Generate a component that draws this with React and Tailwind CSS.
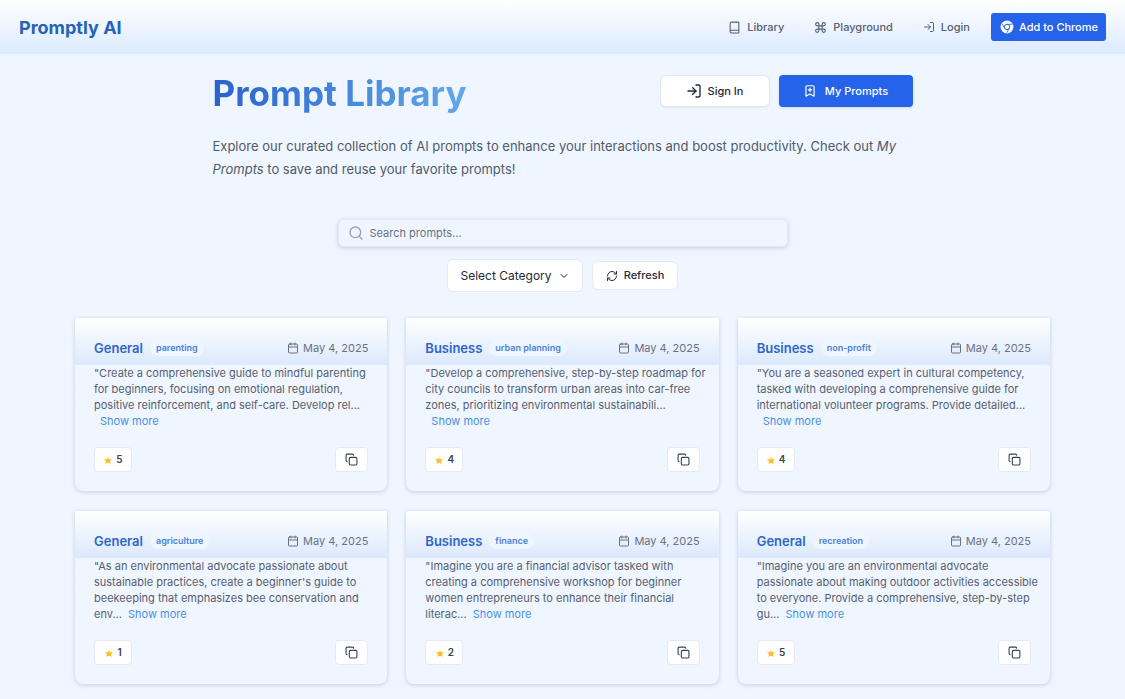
import React, { useState } from "react";
import {
  BookmarkPlus,
  Calendar,
  ChevronDown,
  Command,
  Copy,
  LogIn,
  RefreshCw,
  Search,
} from "lucide-react";
import { LuBook } from "react-icons/lu";

const prompts = [
  {
    id: 1,
    category: "General",
    tag: "parenting",
    text: '"Create a comprehensive guide to mindful parenting for beginners, focusing on emotional regulation, positive reinforcement, and self-care. Develop rel...',
    likes: 5,
  },
  {
    id: 2,
    category: "Business",
    tag: "urban planning",
    text: '"Develop a comprehensive, step-by-step roadmap for city councils to transform urban areas into car-free zones, prioritizing environmental sustainabili...',
    likes: 4,
  },
  {
    id: 3,
    category: "Business",
    tag: "non-profit",
    text: '"You are a seasoned expert in cultural competency, tasked with developing a comprehensive guide for international volunteer programs. Provide detailed...',
    likes: 4,
  },
  {
    id: 4,
    category: "General",
    tag: "agriculture",
    text: '"As an environmental advocate passionate about sustainable practices, create a beginner\'s guide to beekeeping that emphasizes bee conservation and env...',
    likes: 1,
  },
  {
    id: 5,
    category: "Business",
    tag: "finance",
    text: '"Imagine you are a financial advisor tasked with creating a comprehensive workshop for beginner women entrepreneurs to enhance their financial literac...',
    likes: 2,
  },
  {
    id: 6,
    category: "General",
    tag: "recreation",
    text: '"Imagine you are an environmental advocate passionate about making outdoor activities accessible to everyone. Provide a comprehensive, step-by-step gu...',
    likes: 5,
  },
];

const ChromeIcon = () => (
  <svg viewBox="0 0 24 24" className="size-3.5" aria-hidden="true">
    <circle cx="12" cy="12" r="11" fill="#fff" />
    <circle cx="12" cy="12" r="4.6" fill="none" stroke="#2563eb" strokeWidth="1.6" />
    <path
      d="M12 7.4h9M8 14.3L3.8 7M16 14.3l-4.4 7.6"
      fill="none"
      stroke="#2563eb"
      strokeWidth="1.4"
    />
  </svg>
);

const StarIcon = () => (
  <svg viewBox="0 0 20 20" className="size-[10px]" aria-hidden="true">
    <defs>
      <linearGradient id="star-fill" x1="0" y1="0" x2="0" y2="1">
        <stop offset="0" stopColor="#fde68a" stopOpacity="0.4" />
        <stop offset="0.5" stopColor="#fbbf24" />
        <stop offset="1" stopColor="#f5b81f" />
      </linearGradient>
    </defs>
    <path
      d="M10 2l2.5 5.3 5.8.8-4.200 4 1 5.900L10 15.200 4.900 18l1-5.900-4.200-4 5.800-.8z"
      fill="url(#star-fill)"
    />
  </svg>
);

const Navbar = () => (
  <nav className="flex h-[54px] items-center justify-between bg-linear-to-b from-white to-blue-100 px-[19px]">
    <a href="#home" className="text-[18px] font-bold text-[#2563b8]">
      Promptly AI
    </a>
    <div className="flex items-center text-[11px] font-medium text-[#566070]">
      <a href="#library" className="mr-[30px] flex items-center gap-1.5">
        <LuBook className="size-[13px]" />
        Library
      </a>
      <a href="#playground" className="mr-[30px] flex items-center gap-1.5">
        <Command className="size-[13px]" />
        Playground
      </a>
      <a href="#login" className="mr-[21px] flex items-center gap-1.5">
        <LogIn className="size-3" />
        Login
      </a>
      <button className="flex h-7 items-center gap-[5px] rounded-[3px] bg-[#2563eb] pr-2 pl-[9px] text-white">
        <ChromeIcon />
        Add to Chrome
      </button>
    </div>
  </nav>
);

const PromptCard = ({ prompt }) => (
  <article className="flex flex-col overflow-hidden rounded-b-lg rounded-t-xs bg-[#f0f6ff] shadow-[0_1px_4px_rgba(60,80,120,0.24)]">
    {/* Header */}
    <header className="flex items-center justify-between bg-linear-to-b from-white to-[#dbe9fd] px-[19px] pt-5 pb-[7px]">
      <div className="flex items-center gap-[7px]">
        <h2 className="text-[13px] leading-5 font-semibold text-[#2f66c8]">{prompt.category}</h2>
        <span className="rounded-full bg-blue-50 px-1.5 text-[9px] leading-4 font-semibold text-[#4a80da]">
          {prompt.tag}
        </span>
      </div>
      <time className="flex items-center gap-1 text-[11px] text-gray-500" dateTime="2025-05-04">
        <Calendar className="size-3" />
        May 4, 2025
      </time>
    </header>

    {/* Body */}
    <p className="h-16 pr-2 pl-[19px] text-[11px] leading-4 text-[#566070]">
      {prompt.text}
      <button className="ml-1.5 text-[#4a90e2]">Show more</button>
    </p>

    {/* Actions */}
    <footer className="flex items-center justify-between px-[19px] pt-[18px] pb-[19px]">
      <button className="flex h-[25px] w-[38px] items-center justify-center gap-[3px] rounded-sm border border-[#e6e9f5] bg-white text-[10px] font-semibold text-gray-700">
        <StarIcon />
        {prompt.likes}
      </button>
      <button
        aria-label="Copy prompt"
        className="flex h-[25px] w-[33px] items-center justify-center rounded-sm border border-[#e6e9f5] bg-white text-gray-700"
      >
        <Copy className="size-[13px]" />
      </button>
    </footer>
  </article>
);

const App = () => {
  const [search, setSearch] = useState("");

  return (
    <div className="min-h-screen bg-[#eff6ff] font-['Inter',sans-serif] text-gray-800">
      <Navbar />

      <main>
        {/* Hero */}
        <section className="mx-auto max-w-[700px] pt-[15px]">
          <div className="flex items-start justify-between">
            <h1 className="bg-linear-to-r from-[#2b62cc] to-[#62a8e8] bg-clip-text text-[35px] leading-12 font-bold text-transparent">
              Prompt Library
            </h1>
            <div className="flex gap-[9px] pt-[6px] text-[11px] font-medium">
              <button className="flex h-8 w-[110px] items-center justify-center gap-1.5 rounded-md border border-[#dfe7f5] bg-white text-gray-800 shadow-xs">
                <LogIn className="size-4" />
                Sign In
              </button>
              <button className="flex h-8 w-[134px] items-center justify-center gap-2 rounded-sm bg-[#2563eb] text-white shadow-sm">
                <BookmarkPlus className="size-3.5" />
                My Prompts
              </button>
            </div>
          </div>
          <p className="mt-[18px] text-[13px] leading-[23px] text-[#525b69]">
            Explore our curated collection of AI prompts to enhance your interactions and boost
            productivity. Check out <em>My Prompts</em> to save and reuse your favorite prompts!
          </p>
        </section>

        {/* Search and filters */}
        <section className="mt-[38px] flex flex-col items-center gap-3">
          <label className="flex h-7 w-full max-w-[450px] items-center gap-1.5 rounded-md border border-[#e4eaf5] bg-blue-50 px-[9px] shadow-[0_1px_4px_rgba(60,80,120,0.26)]">
            <Search className="size-4 shrink-0 text-gray-400" />
            <input
              type="text"
              aria-label="Search prompts"
              placeholder="Search prompts..."
              value={search}
              onChange={(e) => setSearch(e.target.value)}
              className="w-full bg-transparent text-[11px] outline-none placeholder:text-gray-500"
            />
          </label>
          <div className="flex items-center gap-[9px]">
            <button className="flex h-[33px] w-[136px] items-center justify-center gap-1.5 rounded-md border border-[#e6e9f5] bg-white text-[12px]">
              Select Category
              <ChevronDown className="size-3" />
            </button>
            <button className="flex h-[29px] w-[86px] items-center justify-center gap-1.5 rounded-md border border-[#e6e9f5] bg-white text-[11px] font-medium">
              <RefreshCw className="size-3" />
              Refresh
            </button>
          </div>
        </section>

        {/* Prompt cards */}
        <section className="mx-auto mt-[26px] grid max-w-[975px] grid-cols-3 gap-x-[19px] gap-y-5 pb-4">
          {prompts.map((prompt) => (
            <PromptCard key={prompt.id} prompt={prompt} />
          ))}
        </section>
      </main>
    </div>
  );
};

export default App;
